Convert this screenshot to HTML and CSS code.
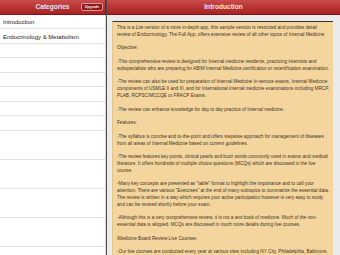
FILE: index.html
```html
<!DOCTYPE html>
<html lang="en">

<head>
    <meta charset="UTF-8">
    <meta name="viewport" content="width=device-width, initial-scale=1.0">
    <link rel="stylesheet" href="styles.css">
</head>

<body>

    <div class="app">
        <aside class="sidebar">
            <header class="bar">
                Categories
                <span class="upgrade">Upgrade</span>
            </header>
            <ul class="cats">
                <li>Introduction</li>
                <li>Endocrinology &amp; Metabolism</li>
            </ul>
        </aside>

        <main class="detail">
            <header class="bar">Introduction</header>
            <div class="scroll">
                <div class="sheet">
                    <p>This is a Lite version of a more in-depth app, this sample version is restricted and provides detail<br>review of Endocrinology. The Full App, offers extensive review of all other topics of Internal Medicine</p>
                    <p>Objective:</p>
                    <p>-This comprehensive review is designed for Internal medicine residents, practicing internists and<br>subspecialists who are preparing for ABIM Internal Medicine certification or recertification examination.</p>
                    <p>-The review can also be used for preparation of Internal Medicine In-service exams, Internal Medicine<br>components of USMLE II and III, and for International internal medicine examinations including MRCP,<br>PLAB, RCPSC/MCCQE or FRACP Exams.</p>
                    <p>-The review can enhance knowledge for day to day practice of Internal medicine.</p>
                    <p>Features:</p>
                    <p>-The syllabus is concise and to-the-point and offers stepwise approach for management of diseases<br>from all areas of Internal Medicine based on current guidelines.</p>
                    <p>-The review features key points, clinical pearls and buzz words commonly used in exams and medical<br>literature. It offers hundreds of multiple choice questions (MCQs) which are discussed in the live<br>course.</p>
                    <p>-Many key concepts are presented as "table" format to highlight the importance and to call your<br>attention. There are various "Exercises" at the end of many subtopics to summarize the essential data.<br>The review is written in a way which requires your active participation however is very easy to study<br>and can be revised shortly before your exam.</p>
                    <p>-Although this is a very comprehensive review, it is not a text book of medicine. Much of the non-<br>essential data is skipped. MCQs are discussed in much more details during live courses.</p>
                    <p>iMedicine Board Review Live Courses:</p>
                    <p>-Our live courses are conducted every year at various sites including NY City, Philadelphia, Baltimore,<br>Washington DC, Chicago, Houston and Los Angeles.</p>
                </div>
            </div>
        </main>
    </div>

</body>

</html>
```

FILE: styles.css
```css
* {
    margin: 0;
    padding: 0;
    box-sizing: border-box;
}

html,
body {
    height: 100%;
    overflow: hidden;
}

body {
    font-family: "Liberation Sans", Arial, sans-serif;
    background-color: #ebebeb;
}

.app {
    display: flex;
    height: 100vh;
}

/* red title bars on both panes */
.bar {
    position: relative;
    flex: none;
    height: 15px;
    line-height: 14px;
    text-align: center;
    font-size: 6.6px;
    font-weight: bold;
    color: #fbeaea;
    text-shadow: 0 -0.5px 0 rgba(0, 0, 0, 0.3);
    background: linear-gradient(to bottom, #cb4c4c 0%, #b93333 50%, #a82424 100%);
    border-bottom: 1px solid #801414;
}

.upgrade {
    position: absolute;
    top: 3px;
    right: 2px;
    width: 22px;
    height: 8px;
    line-height: 7px;
    font-size: 3.6px;
    font-weight: bold;
    background-color: #901a1a;
    border: 0.5px solid #dc9494;
    border-radius: 2px;
}

.sidebar {
    flex: none;
    width: 107px;
    display: flex;
    flex-direction: column;
    background-color: white;
    border-right: 1px solid #4d4d4d;
}

.sidebar .bar {
    border-right: 1px solid #8a1515;
}

.cats {
    flex: 1;
    list-style: none;
    background: repeating-linear-gradient(to bottom, transparent 0, transparent 13.5px, #e3e3e3 13.5px, #e3e3e3 14.5px);
    box-shadow: inset -1px 0 0 #d6d6d6;
}

.cats li {
    height: 14.5px;
    line-height: 14px;
    padding-left: 3px;
    font-size: 6px;
    color: #222;
}

.detail {
    flex: 1;
    min-width: 0;
    display: flex;
    flex-direction: column;
}

.scroll {
    flex: 1;
    overflow: hidden;
    padding: 6px 7px 0 5px;
}

.sheet {
    background-color: #f4d59d;
    border-top: 1px solid #3a3226;
    border-left: 0.5px solid #e2c48d;
    padding: 3px 2px 10px 4px;
    font-size: 4.7px;
    line-height: 6.8px;
    color: #3d3425;
}

.sheet p {
    margin-bottom: 6.8px;
}
```
